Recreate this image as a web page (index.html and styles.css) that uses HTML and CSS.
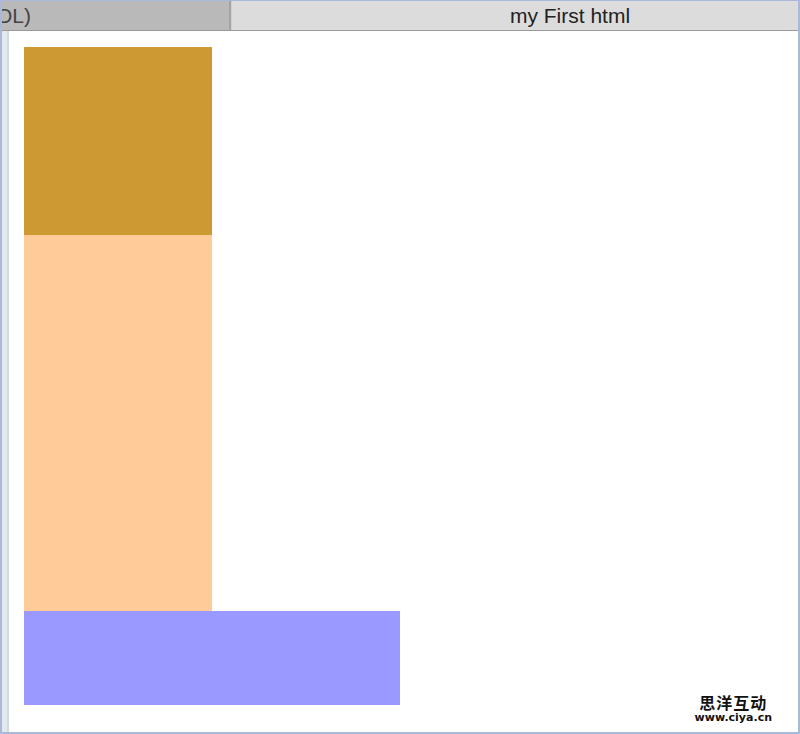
FILE: index.html
```html
<!DOCTYPE html>
<html lang="en">
<head>
    <meta charset="UTF-8">
    <title>my First html</title>
    <link rel="stylesheet" href="styles.css">
</head>
<body>
    <div class="window">
        <div class="tabs">
            <div class="tab tab-back"><span class="tab-clip">OL)</span></div>
            <div class="tab tab-active">my First html</div>
        </div>
        <div class="viewport">
            <div class="gutter"></div>
            <div class="page">
                <div class="box box-top"></div>
                <div class="box box-middle"></div>
                <div class="box box-bottom"></div>
                <div class="mark">
                    <span class="mark-cn">思洋互动</span>
                    <span class="mark-url">www.ciya.cn</span>
                </div>
            </div>
        </div>
    </div>
</body>
</html>
```

FILE: styles.css
```css
html, body {
    margin: 0;
    height: 100%;
    background: #a9b9da;
}

.window {
    box-sizing: border-box;
    height: 734px;
    width: 800px;
    border: 2px solid #a9b9da;
    border-top-width: 1px;
    display: flex;
    flex-direction: column;
    background: white;
}

.tabs {
    display: flex;
    height: 29px;
    border-bottom: 1px solid #9a9a9a;
    font-family: 'Liberation Sans', Arial, sans-serif;
    font-size: 21px;
    color: #222;
}

.tab {
    display: flex;
    align-items: center;
    height: 100%;
}

.tab-back {
    width: 227px;
    background: #b9b9b9;
    border-right: 2px solid #a4a4a4;
    color: #444;
    overflow: hidden;
}

.tab-clip {
    margin-left: -6px;
    white-space: nowrap;
}

.tab-active {
    flex: 1;
    justify-content: center;
    background: #dcdcdc;
    border-left: 1px solid #cfcfcf;
    padding-left: 110px;
}

.viewport {
    flex: 1;
    display: flex;
}

.gutter {
    width: 5px;
    background: #e3e8ec;
    border-right: 2px solid #d3dbe0;
}

.page {
    flex: 1;
    padding: 16px 0 0 15px;
    position: relative;
}

.box-top {
    width: 188px;
    height: 188px;
    background: #cc9933;
}

.box-middle {
    width: 188px;
    height: 376px;
    background: #ffcc99;
}

.box-bottom {
    width: 376px;
    height: 94px;
    background: #9999ff;
}

.mark {
    position: absolute;
    right: 26px;
    bottom: 8px;
    display: flex;
    flex-direction: column;
    align-items: center;
    gap: 2px;
    font-weight: bold;
    color: #111;
}

.mark-cn {
    font-family: 'Noto Sans CJK SC', sans-serif;
    font-size: 16px;
    line-height: 16px;
    letter-spacing: 1px;
}

.mark-url {
    font-family: 'DejaVu Sans', sans-serif;
    font-size: 11px;
    line-height: 12px;
}
```
